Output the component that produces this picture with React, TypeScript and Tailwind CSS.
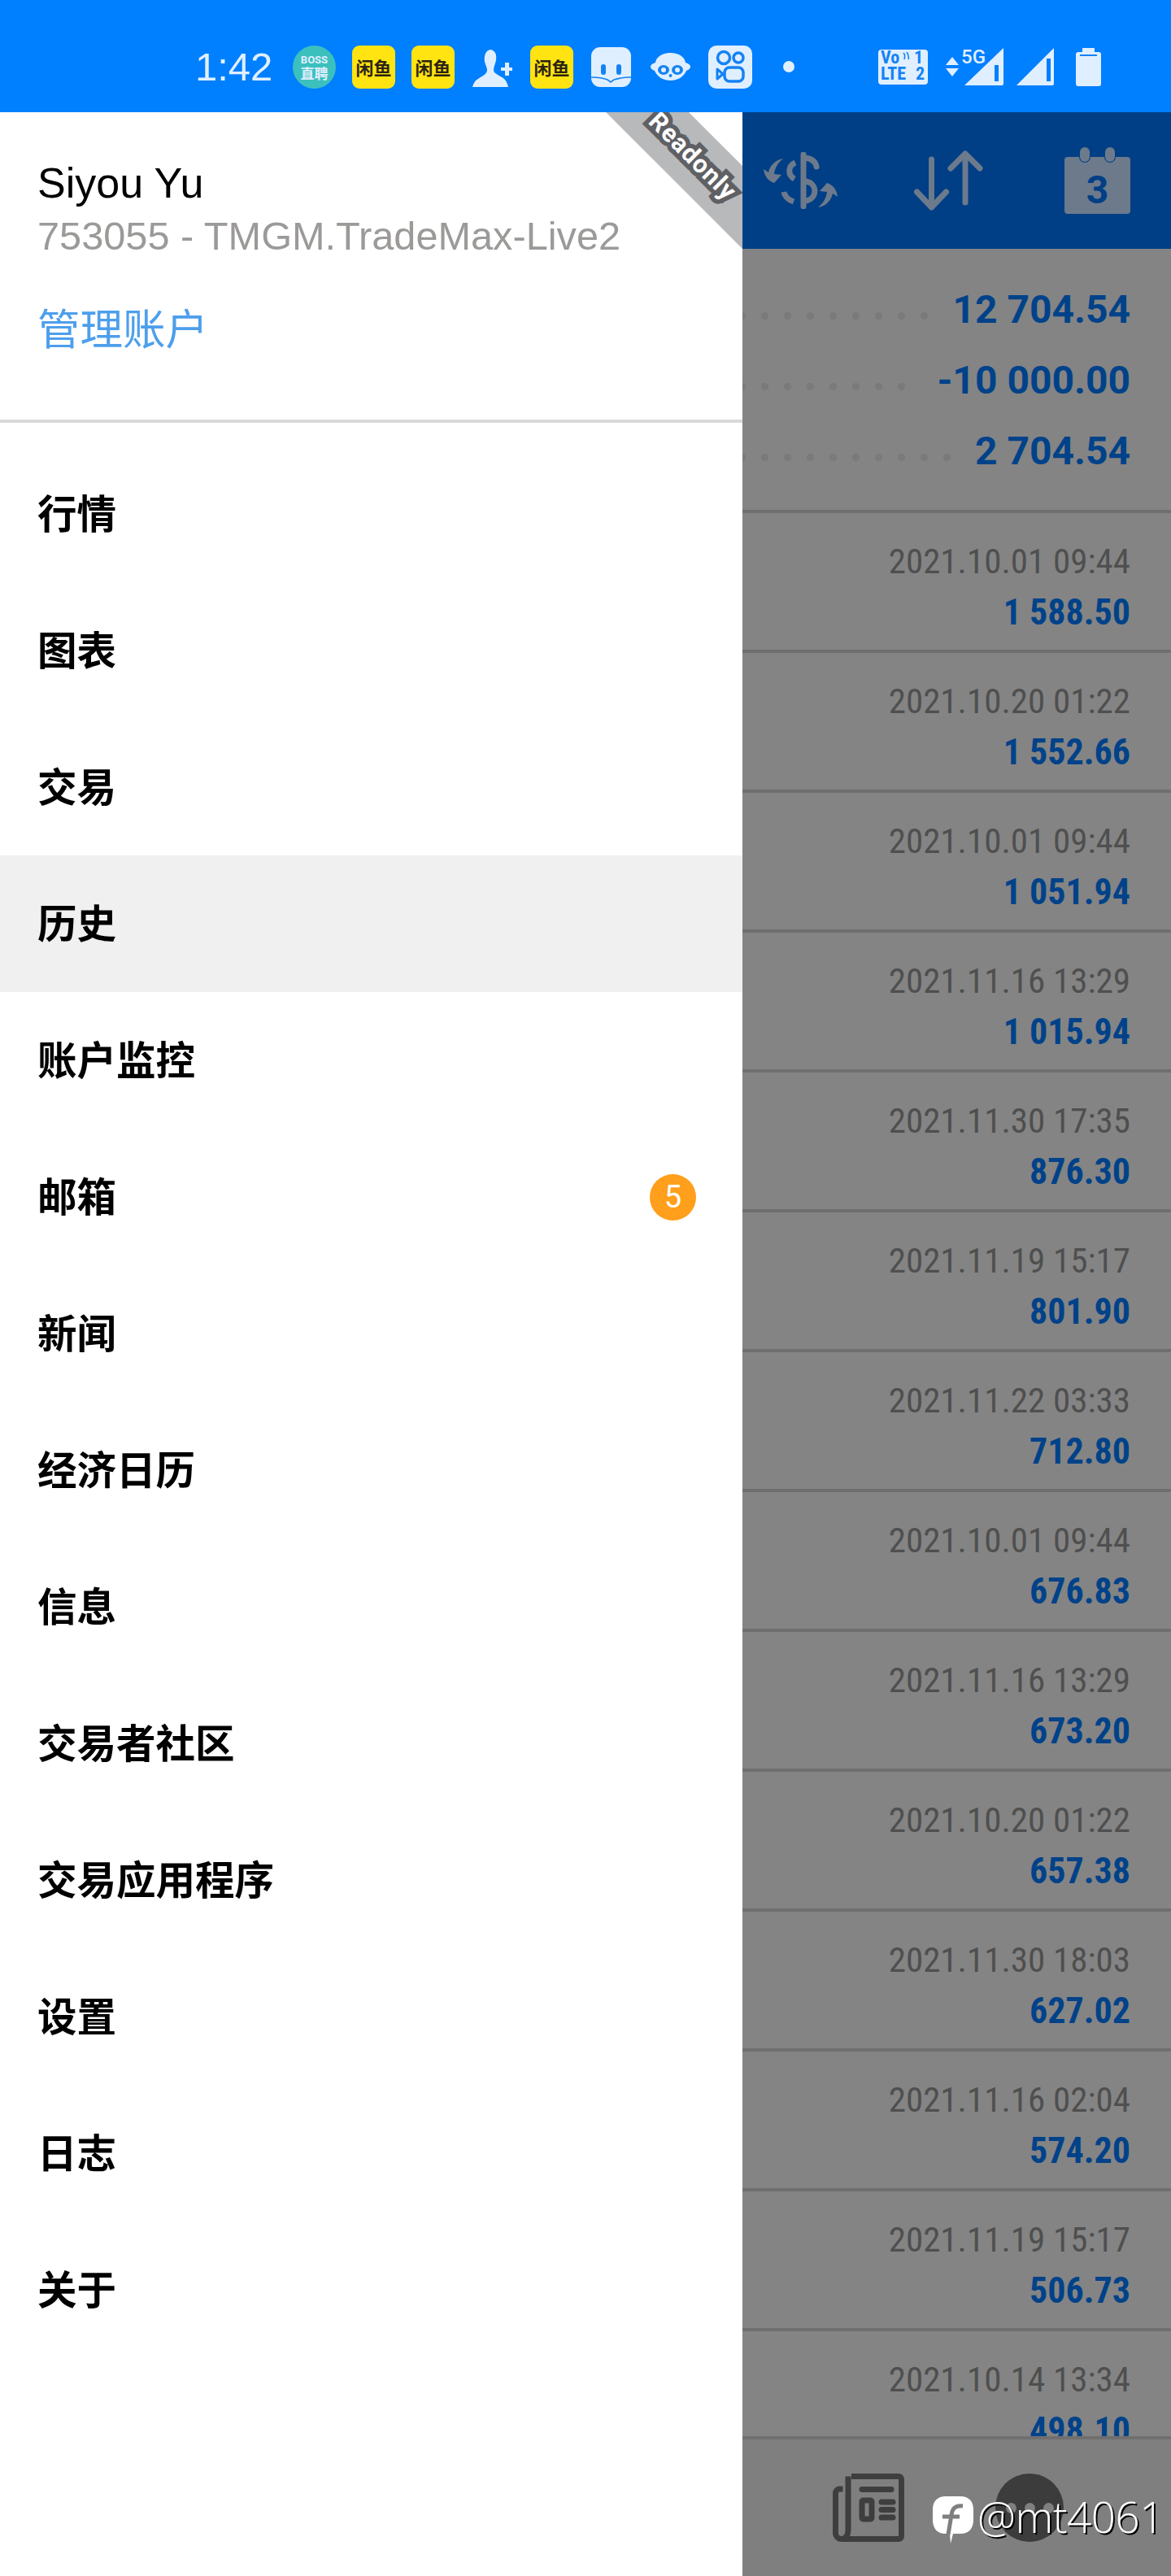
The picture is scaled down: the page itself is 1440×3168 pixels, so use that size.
const menuItems = ['行情', '图表', '交易', '历史', '账户监控', '邮箱', '新闻', '经济日历', '信息', '交易者社区', '交易应用程序', '设置', '日志', '关于']

const summary = [
  { value: '12 704.54', dots: 9 },
  { value: '-10 000.00', dots: 8 },
  { value: '2 704.54', dots: 10 },
]

const deals = [
  ['2021.10.01 09:44', '1 588.50'],
  ['2021.10.20 01:22', '1 552.66'],
  ['2021.10.01 09:44', '1 051.94'],
  ['2021.11.16 13:29', '1 015.94'],
  ['2021.11.30 17:35', '876.30'],
  ['2021.11.19 15:17', '801.90'],
  ['2021.11.22 03:33', '712.80'],
  ['2021.10.01 09:44', '676.83'],
  ['2021.11.16 13:29', '673.20'],
  ['2021.10.20 01:22', '657.38'],
  ['2021.11.30 18:03', '627.02'],
  ['2021.11.16 02:04', '574.20'],
  ['2021.11.19 15:17', '506.73'],
  ['2021.10.14 13:34', '498.10'],
]

const swapArrow = 'M24 8C14 10 8 16 6 25L0 21C1 28 4 35 13 38L22 28L13 27C14 19 18 13 24 8Z'

function XianyuIcon({ className }: { className: string }) {
  return (
    <div className={`flex h-[53px] w-[53px] items-center justify-center rounded-[9px] bg-[#ffe411] font-['Noto_Sans_CJK_SC',sans-serif] text-[22px] leading-none font-bold text-[#2b2412] ${className}`}>
      闲鱼
    </div>
  )
}

function StatusBar() {
  return (
    <div className="flex h-[138px] shrink-0 items-center bg-[#007fff] pt-[26px] text-[#e0efff]">
      <span className="ml-[240px] w-[92px] font-['Liberation_Sans',sans-serif] text-[49px] leading-none font-light">1:42</span>
      <div className="ml-[28px] flex h-[53px] w-[53px] flex-col items-center justify-center rounded-full bg-[#3cc0bd] leading-none">
        <span className="font-['Roboto',sans-serif] text-[13px] font-bold">BOSS</span>
        <span className="mt-[1px] font-['Noto_Sans_CJK_SC',sans-serif] text-[17px] font-bold">直聘</span>
      </div>
      <XianyuIcon className="ml-[20px]" />
      <XianyuIcon className="ml-[20px]" />
      <svg className="mt-[4px] ml-[22px]" width="50" height="46" viewBox="0 0 50 46" fill="currentColor">
        <path d="M22 0c6 1 8 6 7 13-1 5-3 8-3 12 0 5 7 6 13 11 3 3 4 6 5 10H0c1-4 3-8 7-10 6-4 11-6 11-11 0-3-2-6-3-10C14 8 16 1 22 0z" />
        <path d="M41 15h5v6h4v4h-4v6h-5v-6h-5v-4h5z" transform="translate(-1 1)" />
      </svg>
      <XianyuIcon className="ml-[21px]" />
      <svg className="ml-[22px]" width="49" height="49" viewBox="0 0 49 49">
        <rect width="49" height="49" rx="11" fill="#e0efff" />
        <rect x="12" y="21" width="6" height="13" rx="3" fill="#1482f5" />
        <rect x="31" y="21" width="6" height="13" rx="3" fill="#1482f5" />
        <path d="M0 37c8 0 15 1 20 3l4 3 4-3c6-2 13-3 21-3" fill="none" stroke="#1482f5" strokeWidth="1.6" />
      </svg>
      <svg className="ml-[24px]" width="49" height="34" viewBox="0 0 49 34">
        <path d="M24.5 0C35 0 42 5 43 12c4 1 6 3 6 5s-2 4-5 5c-3 7-10 12-19.500 12S8 29 5 22c-3-1-5-3-5-5s2-4 6-5C7 5 14 0 24.500 0z" fill="#e0efff" />
        <ellipse cx="16" cy="21" rx="7" ry="6" fill="#1482f5" />
        <ellipse cx="33" cy="21" rx="7" ry="6" fill="#1482f5" />
        <circle cx="16" cy="21" r="3" fill="#e0efff" />
        <circle cx="33" cy="21" r="3" fill="#e0efff" />
        <circle cx="24.500" cy="28" r="2" fill="#1482f5" />
      </svg>
      <svg className="ml-[22px]" width="54" height="53" viewBox="0 0 54 53">
        <rect width="54" height="53" rx="10" fill="#e0efff" />
        <g fill="none" stroke="#1482f5" strokeWidth="3.500">
          <circle cx="19" cy="15" r="7.500" />
          <circle cx="37" cy="15" r="6" />
          <rect x="20" y="27" width="23" height="17" rx="6" />
        </g>
        <path d="M11 29l7 6-7 6z" fill="none" stroke="#1482f5" strokeWidth="3" strokeLinejoin="round" />
      </svg>
      <span className="ml-[38px] h-[14px] w-[14px] rounded-full bg-[#e0efff]" />
      <div className="relative ml-[103px] flex h-[43px] w-[61px] flex-col rounded-[4px] bg-[#e0efff] px-[3px] font-['Roboto',sans-serif] text-[22px] leading-[20px] font-bold text-[#1482f5] [font-stretch:85%]">
        <div className="flex justify-between">
          <span>Vo</span>
          <span className="pr-[3px]">1</span>
        </div>
        <div className="flex justify-between">
          <span>LTE</span>
          <span className="pr-[1px]">2</span>
        </div>
        <svg className="absolute top-[3px] left-[30px]" width="9" height="11" viewBox="0 0 9 11" fill="none" stroke="#1482f5" strokeWidth="1.600">
          <path d="M1 1c2 2 2 5 1 8M5 0c2 3 3 6 2 9" />
        </svg>
      </div>
      <svg className="ml-[22px]" width="16" height="24" viewBox="0 0 16 24" fill="currentColor">
        <path d="M8 0l8 10H0zM0 14h16l-8 10z" />
      </svg>
      <div className="relative ml-[7px] h-[46px] w-[49px]">
        <svg className="absolute top-0 left-0" width="49" height="46" viewBox="0 0 49 46">
          <path d="M48 0v44a2 2 0 0 1-2 2H0z" fill="currentColor" />
          <rect x="37" y="21" width="5" height="20" fill="#007fff" />
        </svg>
        <span className="absolute top-[-1px] left-[-4px] font-['Roboto',sans-serif] text-[24px] leading-none font-medium [text-shadow:0_0_2px_#007fff]">5G</span>
      </div>
      <svg className="ml-[15px]" width="46" height="46" viewBox="0 0 46 46">
        <path d="M46 0v44a2 2 0 0 1-2 2H0z" fill="currentColor" />
        <rect x="37" y="13" width="5" height="28" fill="#007fff" />
      </svg>
      <svg className="ml-[27px]" width="31" height="47" viewBox="0 0 31 47">
        <path d="M9 0h13a1 1 0 0 1 1 1v4h5a3 3 0 0 1 3 3v36a3 3 0 0 1-3 3H3a3 3 0 0 1-3-3V8a3 3 0 0 1 3-3h5V1a1 1 0 0 1 1-1z" fill="currentColor" />
        <rect x="5" y="8" width="21" height="2" fill="#1482f5" />
      </svg>
    </div>
  )
}

function Ribbon() {
  return (
    <div className="absolute top-0 right-0 h-[170px] w-[170px] overflow-hidden">
      <div className="absolute top-[19px] left-[-42px] flex h-[72px] w-[300px] rotate-45 items-center justify-center bg-[#b8b9bb]">
        <span className="mt-[-3px] font-['Roboto',sans-serif] text-[31px] leading-none font-bold tracking-[1px] text-white [-webkit-text-stroke:11px_#5f6064] [paint-order:stroke_fill] [stroke-linejoin:round]">
          Readonly
        </span>
      </div>
    </div>
  )
}

function Drawer() {
  return (
    <div className="relative flex w-[913px] shrink-0 flex-col bg-white">
      <Ribbon />
      <div className="h-[382px] shrink-0 border-b-4 border-[#d9d9d9] px-[46px] pt-[57px] font-['Liberation_Sans','Noto_Sans_CJK_SC',sans-serif]">
        <div className="text-[52px] leading-[60px] text-black">Siyou Yu</div>
        <div className="mt-[5px] text-[48.700px] leading-[60px] text-[#9b9a98]">753055 - TMGM.TradeMax-Live2</div>
        <div className="mt-[56px] text-[52.500px] leading-[60px] text-[#4d9fec]">管理账户</div>
      </div>
      <div className="pt-[28px]">
        {menuItems.map((item) => (
          <div key={item} className={`flex h-[168px] items-center justify-between pr-[57px] pl-[46px] ${item === '历史' ? 'bg-[#f0f0f0]' : ''}`}>
            <span className="mb-[6px] font-['Noto_Sans_CJK_SC',sans-serif] text-[48.500px] leading-none font-bold text-black">{item}</span>
            {item === '邮箱' && (
              <span className="flex h-[57px] w-[57px] items-center justify-center rounded-full bg-[#ff9f1c] font-['Roboto',sans-serif] text-[38px] leading-none text-white">5</span>
            )}
          </div>
        ))}
      </div>
    </div>
  )
}

function TopBar() {
  return (
    <div className="flex h-[168px] shrink-0 items-center bg-[#003f85] text-[#6c7a8c]">
      <svg className="ml-[26px]" width="91" height="70" viewBox="0 0 91 70" fill="none" stroke="currentColor" strokeWidth="7" strokeLinecap="round">
        <path d="M49 3v64" />
        <path d="M51 7c8 1 13 5 14 11" />
        <path d="M39 13c-9 4-10 15-1 20" strokeLinecap="butt" />
        <path d="M52 36c14 2 15 21 0 24" />
        <path d="M25 49c1 6 6 10 12 12" strokeLinecap="butt" />
        <path d={swapArrow} fill="currentColor" stroke="none" />
        <path d={swapArrow} fill="currentColor" stroke="none" transform="rotate(180 45.500 38)" />
      </svg>
      <svg className="ml-[94px]" width="85" height="74" viewBox="0 0 85 74" fill="none" stroke="currentColor" strokeWidth="7" strokeLinecap="round" strokeLinejoin="round">
        <path d="M21.500 11v59M3.500 51l18 19 18-19" />
        <path d="M63 4v60M45 22L63 4l18 18" />
      </svg>
      <svg className="ml-[100px]" width="81" height="82" viewBox="0 0 81 82">
        <path d="M4 12h14a7 7 0 0 0 14 0h17a7 7 0 0 0 14 0h14a4 4 0 0 1 4 4v62a4 4 0 0 1-4 4H4a4 4 0 0 1-4-4V16a4 4 0 0 1 4-4z" fill="currentColor" />
        <rect x="19" y="0" width="12" height="18" rx="6" fill="currentColor" />
        <rect x="50" y="0" width="12" height="18" rx="6" fill="currentColor" />
        <text x="40.500" y="69" textAnchor="middle" fontFamily="Roboto, sans-serif" fontWeight="700" fontSize="48" fill="#003f85">3</text>
      </svg>
    </div>
  )
}

function Summary() {
  return (
    <div className="shrink-0 overflow-hidden border-b-4 border-[#6f6f6f] pt-[31px] pb-[29px]">
      {summary.map((row) => (
        <div key={row.value} className="flex h-[87px] items-center justify-between pr-[50px]">
          <div className="mt-[15px] ml-[-5px] flex gap-[19px]">
            {Array.from({ length: row.dots }).map((_, i) => (
              <span key={i} className="h-[9px] w-[9px] rounded-full bg-[#7a7a7a]" />
            ))}
          </div>
          <span className="font-['Roboto',sans-serif] text-[48px] leading-[87px] font-bold text-[#004289]">{row.value}</span>
        </div>
      ))}
    </div>
  )
}

function DealRows() {
  return (
    <div className="min-h-0 flex-1 overflow-hidden">
      {deals.map(([date, amount], i) => (
        <div key={i} className="h-[172px] shrink-0 border-b-4 border-[#6f6f6f] pt-[29px] pr-[50px] text-right font-['Roboto',sans-serif] leading-[60px] [font-stretch:75%]">
          <div className="text-[43px] text-[#4f4f4f]">{date}</div>
          <div className="mt-[3px] text-[44px] font-bold text-[#004289]">{amount}</div>
        </div>
      ))}
    </div>
  )
}

function BottomBar() {
  return (
    <div className="relative flex h-[172px] shrink-0 items-center border-t-4 border-[#6f6f6f] bg-[#7f7f7f]">
      <svg className="ml-[111px]" width="88" height="84" viewBox="0 0 88 84" fill="none" stroke="#3e3e3e" strokeWidth="7" strokeLinejoin="round">
        <path d="M23 3.500h58a3.500 3.500 0 0 1 3.500 3.500v70a3.500 3.500 0 0 1-3.500 3.500H11a7.500 7.500 0 0 1-7.500-7.500V24a5 5 0 0 1 5-5h4" />
        <path d="M19 3.500v66c0 6-3 11-8 11" />
        <path d="M36 19.500h36M60 35h14M60 44.500h14M60 54h14" strokeLinecap="round" />
        <rect x="36" y="33" width="12" height="23" rx="1.500" />
      </svg>
      <div className="relative ml-[112px] flex h-[84px] w-[84px] items-center justify-center gap-[10px] rounded-full bg-[#3c3c3c]">
        <span className="h-[13px] w-[13px] rounded-full bg-[#7f7f7f]" />
        <span className="h-[13px] w-[13px] rounded-full bg-[#7f7f7f]" />
        <span className="h-[13px] w-[13px] rounded-full bg-[#7f7f7f]" />
      </div>
      <div className="absolute top-[68px] left-[234px] flex items-center">
        <svg width="50" height="58" viewBox="0 0 50 58">
          <path d="M16 0h18c10 0 16 6 16 16v13c0 11-6 17-16 17h-9L22 58 21 46h-5C6 46 0 40 0 29V16C0 6 6 0 16 0z" fill="#fff" />
          <path d="M19 47l4-24c1-8 5-12 14-11M12 25h21" fill="none" stroke="#7f7f7f" strokeWidth="5" />
        </svg>
        <span className="mb-[8px] ml-[5px] font-['Open_Sans',sans-serif] text-[53px] leading-none font-light tracking-[-0.500px] text-white [text-shadow:2px_2px_0_#000]">@mt4061</span>
      </div>
    </div>
  )
}

export default function App() {
  return (
    <div className="flex h-[3168px] w-[1440px] flex-col overflow-hidden">
      <StatusBar />
      <div className="flex min-h-0 flex-1">
        <Drawer />
        <div className="flex min-w-0 flex-1 flex-col overflow-hidden bg-[#848484]">
          <TopBar />
          <Summary />
          <DealRows />
          <BottomBar />
        </div>
      </div>
    </div>
  )
}
